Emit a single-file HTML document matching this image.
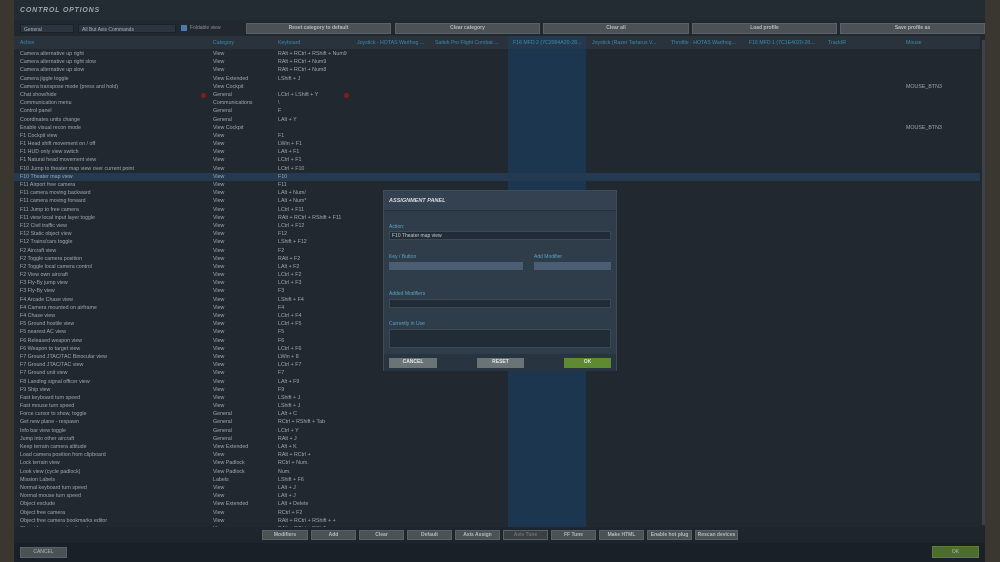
<!DOCTYPE html>
<html><head><meta charset="utf-8"><style>
*{margin:0;padding:0;box-sizing:border-box}
body{width:1000px;height:562px;overflow:hidden;background:#3a3630;font-family:"Liberation Sans",sans-serif;position:relative}
.abs{position:absolute}
#panel{left:14px;top:0;width:971px;height:562px;background:#21282f}
#title{left:14px;top:0;width:971px;height:20px;background:#232b33;color:#9ba6b0;font-size:7px;font-weight:bold;font-style:italic;letter-spacing:.8px;padding:7px 0 0 6px}
.dd{background:#2b3540;color:#aab2ba;font-size:5px;padding:2px 3px;height:9px;border:1px solid #1a2128}
.btn{background:#4b5256;color:#b4b9bc;font-size:5px;font-weight:bold;text-align:center;border:1px solid #5a6266}
#hdr{left:14px;top:36px;width:966px;height:13px;background:#2a333c}
.h{position:absolute;top:4px;font-size:5.2px;color:#3a8ab0}
#rows{left:14px;top:50px;width:966px;height:477px;overflow:hidden}
.r{height:8.2px;line-height:8.2px;font-size:5.3px;color:#a0a8b0;position:relative;white-space:nowrap}
.r span{position:absolute}
.r .a{left:6px}.r .c{left:199px}.r .k{left:264px}.r .m{left:892px}
.sel{background:#243a50}
#modal{left:383px;top:190px;width:234px;height:181px;background:#2f3c4a;border:1px solid #3d4b59}
.lbl{color:#5aa3c4;font-size:5px}
.fld{background:#222c36;border:1px solid #3b4856}
.mb{font-size:5px;font-weight:bold;color:#e0e4e6;text-align:center;line-height:9px;height:10px}
</style></head><body>
<div id="panel" class="abs"></div>
<div id="title" class="abs">CONTROL OPTIONS</div>
<div class="abs dd" style="left:20px;top:24px;width:54px">General</div>
<div class="abs dd" style="left:78px;top:24px;width:98px">All But Axis Commands</div>
<div class="abs" style="left:181px;top:25px;width:6px;height:6px;background:#4d7aa8"></div>
<div class="abs" style="left:190px;top:25px;font-size:5px;color:#8a949c">Foldable view</div>
<div class="abs btn" style="left:246px;top:23px;width:145px;height:11px;line-height:9px">Reset category to default</div>
<div class="abs btn" style="left:395px;top:23px;width:145px;height:11px;line-height:9px">Clear category</div>
<div class="abs btn" style="left:543px;top:23px;width:146px;height:11px;line-height:9px">Clear all</div>
<div class="abs btn" style="left:692px;top:23px;width:145px;height:11px;line-height:9px">Load profile</div>
<div class="abs btn" style="left:840px;top:23px;width:145px;height:11px;line-height:9px">Save profile as</div>
<div class="abs" style="left:508px;top:36px;width:78px;height:491px;background:#1d3650"></div>
<div id="hdr" class="abs"></div>
<div class="abs" style="left:508px;top:36px;width:78px;height:13px;background:#24394e"></div>
<div class="abs" style="left:14px;top:36px;width:966px;height:13px">
<span class="h" style="left:6px">Action</span><span class="h" style="left:199px">Category</span><span class="h" style="left:264px">Keyboard</span><span class="h" style="left:343px">Joystick - HOTAS Warthog ...</span><span class="h" style="left:421px">Saitek Pro Flight Combat ...</span><span class="h" style="left:499px">F16 MFD 2 (7C2084A20-28...</span><span class="h" style="left:578px">Joystick (Razer Tartarus V...</span><span class="h" style="left:657px">Throttle - HOTAS Warthog...</span><span class="h" style="left:735px">F16 MFD 1 (7C1E4020-28...</span><span class="h" style="left:814px">TrackIR</span><span class="h" style="left:892px">Mouse</span>
</div>
<div id="rows" class="abs">
<div class="r"><span class="a">Camera alternative up right</span><span class="c">View</span><span class="k">RAlt + RCtrl + RShift + Num9</span></div>
<div class="r"><span class="a">Camera alternative up right slow</span><span class="c">View</span><span class="k">RAlt + RCtrl + Num9</span></div>
<div class="r"><span class="a">Camera alternative up slow</span><span class="c">View</span><span class="k">RAlt + RCtrl + Num8</span></div>
<div class="r"><span class="a">Camera jiggle toggle</span><span class="c">View Extended</span><span class="k">LShift + J</span></div>
<div class="r"><span class="a">Camera transpose mode (press and hold)</span><span class="c">View Cockpit</span><span class="m">MOUSE_BTN3</span></div>
<div class="r"><span class="a">Chat show/hide</span><span class="c">General</span><span class="k">LCtrl + LShift + Y</span><span style="left:187px;top:2px;width:5px;height:5px;border-radius:50%;background:#8a1a1a"></span><span style="left:330px;top:2px;width:5px;height:5px;border-radius:50%;background:#8a1a1a"></span></div>
<div class="r"><span class="a">Communication menu</span><span class="c">Communications</span><span class="k">\</span></div>
<div class="r"><span class="a">Control panel</span><span class="c">General</span><span class="k">F</span></div>
<div class="r"><span class="a">Coordinates units change</span><span class="c">General</span><span class="k">LAlt + Y</span></div>
<div class="r"><span class="a">Enable visual recon mode</span><span class="c">View Cockpit</span><span class="m">MOUSE_BTN3</span></div>
<div class="r"><span class="a">F1 Cockpit view</span><span class="c">View</span><span class="k">F1</span></div>
<div class="r"><span class="a">F1 Head shift movement on / off</span><span class="c">View</span><span class="k">LWin + F1</span></div>
<div class="r"><span class="a">F1 HUD only view switch</span><span class="c">View</span><span class="k">LAlt + F1</span></div>
<div class="r"><span class="a">F1 Natural head movement view</span><span class="c">View</span><span class="k">LCtrl + F1</span></div>
<div class="r"><span class="a">F10 Jump to theater map view over current point</span><span class="c">View</span><span class="k">LCtrl + F10</span></div>
<div class="r sel"><span class="a">F10 Theater map view</span><span class="c">View</span><span class="k">F10</span></div>
<div class="r"><span class="a">F11 Airport free camera</span><span class="c">View</span><span class="k">F11</span></div>
<div class="r"><span class="a">F11 camera moving backward</span><span class="c">View</span><span class="k">LAlt + Num/</span></div>
<div class="r"><span class="a">F11 camera moving forward</span><span class="c">View</span><span class="k">LAlt + Num*</span></div>
<div class="r"><span class="a">F11 Jump to free camera</span><span class="c">View</span><span class="k">LCtrl + F11</span></div>
<div class="r"><span class="a">F11 view local input layer toggle</span><span class="c">View</span><span class="k">RAlt + RCtrl + RShift + F11</span></div>
<div class="r"><span class="a">F12 Civil traffic view</span><span class="c">View</span><span class="k">LCtrl + F12</span></div>
<div class="r"><span class="a">F12 Static object view</span><span class="c">View</span><span class="k">F12</span></div>
<div class="r"><span class="a">F12 Trains/cars toggle</span><span class="c">View</span><span class="k">LShift + F12</span></div>
<div class="r"><span class="a">F2 Aircraft view</span><span class="c">View</span><span class="k">F2</span></div>
<div class="r"><span class="a">F2 Toggle camera position</span><span class="c">View</span><span class="k">RAlt + F2</span></div>
<div class="r"><span class="a">F2 Toggle local camera control</span><span class="c">View</span><span class="k">LAlt + F2</span></div>
<div class="r"><span class="a">F2 View own aircraft</span><span class="c">View</span><span class="k">LCtrl + F2</span></div>
<div class="r"><span class="a">F3 Fly-By jump view</span><span class="c">View</span><span class="k">LCtrl + F3</span></div>
<div class="r"><span class="a">F3 Fly-By view</span><span class="c">View</span><span class="k">F3</span></div>
<div class="r"><span class="a">F4 Arcade Chase view</span><span class="c">View</span><span class="k">LShift + F4</span></div>
<div class="r"><span class="a">F4 Camera mounted on airframe</span><span class="c">View</span><span class="k">F4</span></div>
<div class="r"><span class="a">F4 Chase view</span><span class="c">View</span><span class="k">LCtrl + F4</span></div>
<div class="r"><span class="a">F5 Ground hostile view</span><span class="c">View</span><span class="k">LCtrl + F5</span></div>
<div class="r"><span class="a">F5 nearest AC view</span><span class="c">View</span><span class="k">F5</span></div>
<div class="r"><span class="a">F6 Released weapon view</span><span class="c">View</span><span class="k">F6</span></div>
<div class="r"><span class="a">F6 Weapon to target view</span><span class="c">View</span><span class="k">LCtrl + F6</span></div>
<div class="r"><span class="a">F7 Ground JTAC/TAC Binocular view</span><span class="c">View</span><span class="k">LWin + 8</span></div>
<div class="r"><span class="a">F7 Ground JTAC/TAC view</span><span class="c">View</span><span class="k">LCtrl + F7</span></div>
<div class="r"><span class="a">F7 Ground unit view</span><span class="c">View</span><span class="k">F7</span></div>
<div class="r"><span class="a">F8 Landing signal officer view</span><span class="c">View</span><span class="k">LAlt + F9</span></div>
<div class="r"><span class="a">F9 Ship view</span><span class="c">View</span><span class="k">F9</span></div>
<div class="r"><span class="a">Fast keyboard turn speed</span><span class="c">View</span><span class="k">LShift + J</span></div>
<div class="r"><span class="a">Fast mouse turn speed</span><span class="c">View</span><span class="k">LShift + J</span></div>
<div class="r"><span class="a">Force cursor to show, toggle</span><span class="c">General</span><span class="k">LAlt + C</span></div>
<div class="r"><span class="a">Get new plane - respawn</span><span class="c">General</span><span class="k">RCtrl + RShift + Tab</span></div>
<div class="r"><span class="a">Info bar view toggle</span><span class="c">General</span><span class="k">LCtrl + Y</span></div>
<div class="r"><span class="a">Jump into other aircraft</span><span class="c">General</span><span class="k">RAlt + J</span></div>
<div class="r"><span class="a">Keep terrain camera altitude</span><span class="c">View Extended</span><span class="k">LAlt + K</span></div>
<div class="r"><span class="a">Load camera position from clipboard</span><span class="c">View</span><span class="k">RAlt + RCtrl +</span></div>
<div class="r"><span class="a">Lock terrain view</span><span class="c">View Padlock</span><span class="k">RCtrl + Num.</span></div>
<div class="r"><span class="a">Look view (cycle padlock)</span><span class="c">View Padlock</span><span class="k">Num.</span></div>
<div class="r"><span class="a">Mission Labels</span><span class="c">Labels</span><span class="k">LShift + F6</span></div>
<div class="r"><span class="a">Normal keyboard turn speed</span><span class="c">View</span><span class="k">LAlt + J</span></div>
<div class="r"><span class="a">Normal mouse turn speed</span><span class="c">View</span><span class="k">LAlt + J</span></div>
<div class="r"><span class="a">Object exclude</span><span class="c">View Extended</span><span class="k">LAlt + Delete</span></div>
<div class="r"><span class="a">Object free camera</span><span class="c">View</span><span class="k">RCtrl + F2</span></div>
<div class="r"><span class="a">Object free camera bookmarks editor</span><span class="c">View</span><span class="k">RAlt + RCtrl + RShift + +</span></div>
<div class="r"><span class="a">Object free camera bookmarks</span><span class="c">View</span><span class="k">RAlt + RCtrl + RShift</span></div>
</div>
<div class="abs" style="left:982px;top:40px;width:3px;height:485px;background:#3a4148"></div>
<div class="abs" style="left:14px;top:527px;width:971px;height:16px;background:#1e252c"></div>
<div class="abs btn" style="left:262px;top:530px;width:46px;height:10px;line-height:8px">Modifiers</div>
<div class="abs btn" style="left:311px;top:530px;width:45px;height:10px;line-height:8px">Add</div>
<div class="abs btn" style="left:359px;top:530px;width:45px;height:10px;line-height:8px">Clear</div>
<div class="abs btn" style="left:407px;top:530px;width:45px;height:10px;line-height:8px">Default</div>
<div class="abs btn" style="left:455px;top:530px;width:45px;height:10px;line-height:8px">Axis Assign</div>
<div class="abs btn" style="left:503px;top:530px;width:45px;height:10px;line-height:8px;background:#3a4044;color:#6c7276">Axis Tune</div>
<div class="abs btn" style="left:551px;top:530px;width:45px;height:10px;line-height:8px">FF Tune</div>
<div class="abs btn" style="left:599px;top:530px;width:45px;height:10px;line-height:8px">Make HTML</div>
<div class="abs btn" style="left:647px;top:530px;width:45px;height:10px;line-height:8px">Enable hot plug</div>
<div class="abs btn" style="left:695px;top:530px;width:43px;height:10px;line-height:8px">Rescan devices</div>
<div class="abs" style="left:14px;top:543px;width:971px;height:19px;background:#1a2027"></div>
<div class="abs btn" style="left:20px;top:547px;width:47px;height:11px;line-height:9px;font-weight:normal">CANCEL</div>
<div class="abs btn" style="left:932px;top:546px;width:47px;height:12px;line-height:10px;background:#4d6d2f;border-color:#5d7e3a;font-weight:normal">OK</div>

<div id="modal" class="abs">
<div class="abs" style="left:0;top:0;width:232px;height:20px;background:#334150;border-bottom:1px solid #26313c;color:#d6dbe0;font-size:5.5px;font-weight:bold;font-style:italic;padding:7px 0 0 5px">ASSIGNMENT PANEL</div>
<div class="abs lbl" style="left:5px;top:33px">Action:</div>
<div class="abs fld" style="left:5px;top:40px;width:222px;height:9px;color:#c5cbd0;font-size:5px;padding:1px 2px">F10 Theater map view</div>
<div class="abs lbl" style="left:5px;top:63px">Key / Button</div>
<div class="abs" style="left:5px;top:71px;width:134px;height:8px;background:#4a5d73"></div>
<div class="abs lbl" style="left:150px;top:63px">Add Modifier</div>
<div class="abs" style="left:150px;top:71px;width:77px;height:8px;background:#4a5d73"></div>
<div class="abs lbl" style="left:5px;top:100px">Added Modifiers</div>
<div class="abs fld" style="left:5px;top:108px;width:222px;height:9px"></div>
<div class="abs lbl" style="left:5px;top:130px">Currently in Use</div>
<div class="abs fld" style="left:5px;top:138px;width:222px;height:19px"></div>
<div class="abs" style="left:0;top:163px;width:232px;height:17px;background:#283440"></div>
<div class="abs mb" style="left:5px;top:167px;width:48px;background:#6a7476">CANCEL</div>
<div class="abs mb" style="left:93px;top:167px;width:47px;background:#6a7476">RESET</div>
<div class="abs mb" style="left:180px;top:167px;width:47px;background:#5e8a32">OK</div>
</div>
</body></html>
